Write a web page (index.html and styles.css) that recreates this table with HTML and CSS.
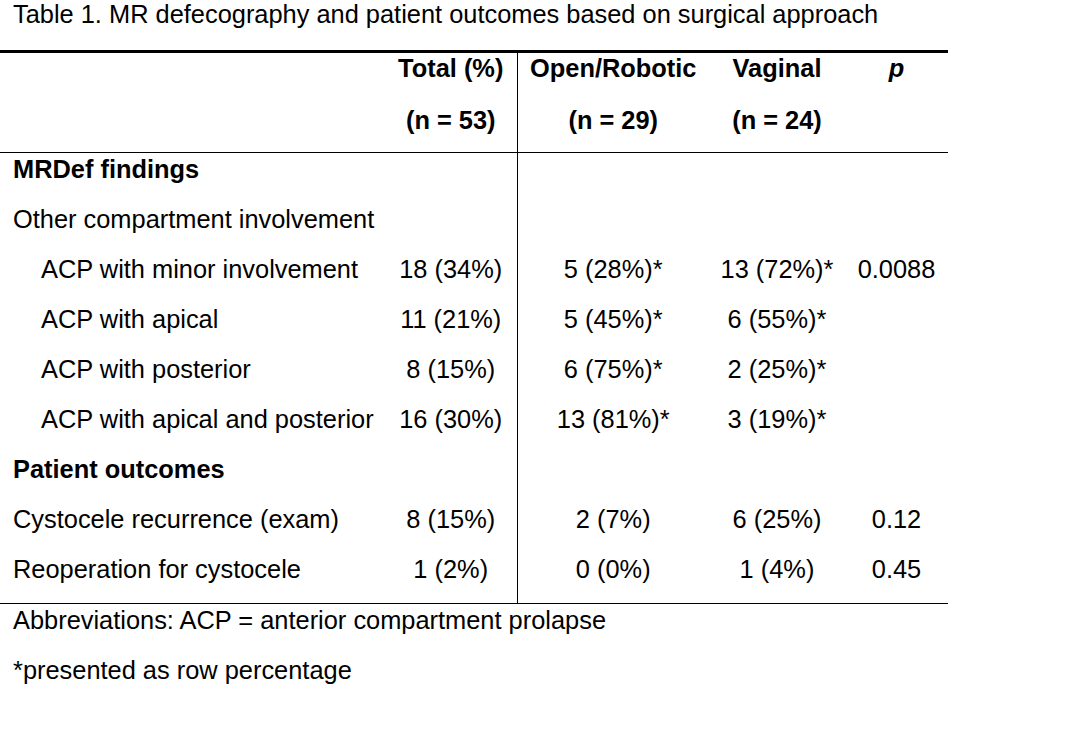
FILE: index.html
```html
<!DOCTYPE html>
<html lang="en">
<head>
<meta charset="utf-8">
<title>Table 1</title>
<link rel="stylesheet" href="styles.css">
</head>
<body>
<div class="page">
  <p class="caption">Table 1. MR defecography and patient outcomes based on surgical approach</p>
  <table class="data">
    <colgroup>
      <col class="c-label">
      <col class="c-total">
      <col class="c-open">
      <col class="c-vag">
      <col class="c-p">
    </colgroup>
    <thead>
      <tr class="h1">
        <th class="label"></th>
        <th>Total (%)</th>
        <th class="split">Open/Robotic</th>
        <th>Vaginal</th>
        <th><em>p</em></th>
      </tr>
      <tr class="h2">
        <th class="label"></th>
        <th>(n = 53)</th>
        <th class="split">(n = 29)</th>
        <th>(n = 24)</th>
        <th></th>
      </tr>
    </thead>
    <tbody>
      <tr>
        <td class="label section">MRDef findings</td>
        <td></td><td class="split"></td><td></td><td></td>
      </tr>
      <tr>
        <td class="label">Other compartment involvement</td>
        <td></td><td class="split"></td><td></td><td></td>
      </tr>
      <tr>
        <td class="label indent">ACP with minor involvement</td>
        <td>18 (34%)</td><td class="split">5 (28%)*</td><td>13 (72%)*</td><td>0.0088</td>
      </tr>
      <tr>
        <td class="label indent">ACP with apical</td>
        <td>11 (21%)</td><td class="split">5 (45%)*</td><td>6 (55%)*</td><td></td>
      </tr>
      <tr>
        <td class="label indent">ACP with posterior</td>
        <td>8 (15%)</td><td class="split">6 (75%)*</td><td>2 (25%)*</td><td></td>
      </tr>
      <tr>
        <td class="label indent">ACP with apical and posterior</td>
        <td>16 (30%)</td><td class="split">13 (81%)*</td><td>3 (19%)*</td><td></td>
      </tr>
      <tr>
        <td class="label section">Patient outcomes</td>
        <td></td><td class="split"></td><td></td><td></td>
      </tr>
      <tr>
        <td class="label">Cystocele recurrence (exam)</td>
        <td>8 (15%)</td><td class="split">2 (7%)</td><td>6 (25%)</td><td>0.12</td>
      </tr>
      <tr>
        <td class="label">Reoperation for cystocele</td>
        <td>1 (2%)</td><td class="split">0 (0%)</td><td>1 (4%)</td><td>0.45</td>
      </tr>
    </tbody>
  </table>
  <div class="notes">
    <p class="note">Abbreviations: ACP = anterior compartment prolapse</p>
    <p class="note">*presented as row percentage</p>
  </div>
</div>
</body>
</html>
```

FILE: styles.css
```css
html, body {
  margin: 0;
  padding: 0;
  background: #ffffff;
}

.page {
  font-family: "Liberation Sans", Arial, sans-serif;
  font-size: 25.4px;
  color: #000000;
  width: 1080px;
  height: 756px;
}

.caption {
  margin: 0 0 22px 0;
  padding-left: 13px;
  line-height: 28px;
  white-space: nowrap;
}

.data {
  width: 948px;
  border-collapse: collapse;
  table-layout: fixed;
  border-top: 3px solid #000;
  border-bottom: 1px solid #000;
}

.c-label { width: 385px; }
.c-total { width: 132px; }
.c-open  { width: 192px; }
.c-vag   { width: 136px; }
.c-p     { width: 103px; }

.data th,
.data td {
  padding: 0 0 18px 0;
  line-height: 32px;
  text-align: center;
  vertical-align: top;
  white-space: nowrap;
  font-weight: normal;
}

.data th {
  font-weight: bold;
}

.data .h1 th {
  line-height: 30px;
  padding-bottom: 20px;
}

.data .h2 th {
  line-height: 34px;
  padding-bottom: 15px;
  border-bottom: 1px solid #000;
}

.data th em {
  font-style: italic;
}

.data .split {
  border-left: 1px solid #000;
}

.data .label {
  text-align: left;
  padding-left: 13px;
}

.data .indent {
  padding-left: 41px;
}

.data .section {
  font-weight: bold;
}

.notes {
  padding-left: 13px;
}

.note {
  margin: 0;
  line-height: 32px;
  padding-bottom: 18px;
  white-space: nowrap;
}
```
